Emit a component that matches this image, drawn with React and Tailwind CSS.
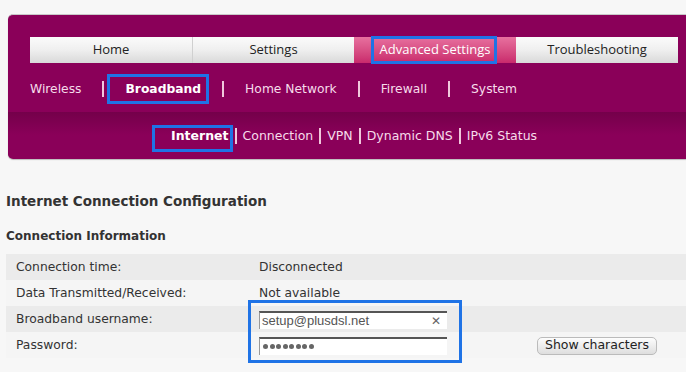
const tabs = ["Home", "Settings", "Advanced Settings", "Troubleshooting"];
const subNav = ["Wireless", "Broadband", "Home Network", "Firewall", "System"];
const thirdNav = ["Internet", "Connection", "VPN", "Dynamic DNS", "IPv6 Status"];

const rows = [
  { label: "Connection time:", value: "Disconnected" },
  { label: "Data Transmitted/Received:", value: "Not available" },
  { label: "Broadband username:", input: "user" },
  { label: "Password:", input: "pass" },
];

export default function App() {
  return (
    <div className="relative w-[686px] h-[372px] overflow-hidden bg-[#f7f7f7] font-['DejaVu_Sans',sans-serif] text-[#333]">
      {/* header panel */}
      <div className="pt-[14px] pl-[8px]">
        <div className="h-[145px] rounded-l-[5px] border-t border-[#c9c9c9] bg-[#8a0059] shadow-[0_1px_1px_rgba(0,0,0,0.25)]">
          {/* main tabs */}
          <div className="ml-[22px] mt-[22px] flex h-[26px] w-[648px] font-['Open_Sans',sans-serif] text-[13px]">
            {tabs.map((t, i) =>
              t === "Advanced Settings" ? (
                <div
                  key={t}
                  className="flex w-[162px] items-center justify-center bg-gradient-to-b from-[#e7709f] to-[#c9286c] text-white"
                >
                  {t}
                </div>
              ) : (
                <div
                  key={t}
                  className={
                    "flex w-[162px] items-center justify-center bg-gradient-to-b from-[#fbfbfb] via-[#efefef] to-[#d9d9d9] text-[#222]" +
                    (i === 1 ? " border-l border-[#d0d0d0]" : "")
                  }
                >
                  {t}
                </div>
              )
            )}
          </div>

          {/* second level */}
          <div className="ml-[22px] mt-[17px] flex h-[18px] items-center gap-[21px] text-[12.3px] text-[#f6dcea]">
            {subNav.map((s, i) => (
              <div key={s} className="flex items-center gap-[21px]">
                {i > 0 && <span className="h-[16px] w-[2px] bg-[#f0c8dc]" />}
                <span className={s === "Broadband" ? "font-bold text-white" : ""}>{s}</span>
              </div>
            ))}
          </div>

          {/* third level */}
          <div className="mt-[14px] h-[46px] rounded-bl-[5px] bg-gradient-to-b from-[#74004a] via-[#8a0059] to-[#8a0059] pt-[15px]">
            <div className="ml-[163px] flex items-center gap-[6px] text-[12.5px] text-[#f6dcea]">
              {thirdNav.map((s, i) => (
                <div key={s} className="flex items-center gap-[6px]">
                  {i > 0 && <span className="h-[16px] w-[2px] bg-[#f0c8dc]" />}
                  <span className={s === "Internet" ? "font-bold text-white" : ""}>{s}</span>
                </div>
              ))}
            </div>
          </div>
        </div>
      </div>

      {/* content */}
      <div className="pl-[6px] pt-[33px]">
        <h1 className="text-[13.5px] font-bold leading-[18px] text-[#333]">Internet Connection Configuration</h1>
        <h2 className="mt-[18px] text-[12px] font-bold leading-[16px] text-[#333]">Connection Information</h2>

        <div className="mt-[10px] text-[12.3px] text-[#333]">
          {rows.map((r, i) => (
            <div
              key={r.label}
              className={"flex h-[26px] items-center pt-[1px] " + (i % 2 === 0 ? "bg-[#ebebeb]" : "bg-[#f5f5f5]")}
            >
              <div className="w-[253px] pl-[10px]">{r.label}</div>
              {r.value && <div>{r.value}</div>}
              {r.input === "user" && (
                <div className="flex h-[18px] w-[188px] items-center justify-between border-t-2 border-l border-t-[#555] border-l-[#999] bg-white pl-[2px] pr-[6px] font-['Liberation_Sans',sans-serif] text-[13px] text-[#555]">
                  <span>setup@plusdsl.net</span>
                  <span className="text-[12px] text-[#666]">✕</span>
                </div>
              )}
              {r.input === "pass" && (
                <>
                  <div className="flex h-[18px] w-[188px] items-center gap-[1.5px] border-t-2 border-l border-t-[#555] border-l-[#999] bg-white pl-[3px]">
                    {[0, 1, 2, 3, 4, 5, 6, 7].map((d) => (
                      <span key={d} className="h-[5px] w-[5px] rounded-full bg-[#666]" />
                    ))}
                  </div>
                  <button className="ml-[90px] h-[18px] w-[120px] rounded-[5px] border border-[#bbb] bg-gradient-to-b from-[#fdfdfd] to-[#dedede] text-[12.5px] leading-none text-[#222]">
                    Show characters
                  </button>
                </>
              )}
            </div>
          ))}
        </div>
      </div>

      {/* annotation boxes */}
      <div className="absolute left-[371px] top-[36px] h-[28px] w-[126px] border-[3px] border-[#1f73e6]" />
      <div className="absolute left-[107px] top-[74px] h-[30px] w-[102px] border-[3px] border-[#1f73e6]" />
      <div className="absolute left-[152px] top-[125px] h-[27px] w-[81px] border-[3px] border-[#1f73e6]" />
      <div className="absolute left-[248px] top-[300px] h-[63px] w-[214px] border-[3px] border-[#1f73e6]" />
    </div>
  );
}
